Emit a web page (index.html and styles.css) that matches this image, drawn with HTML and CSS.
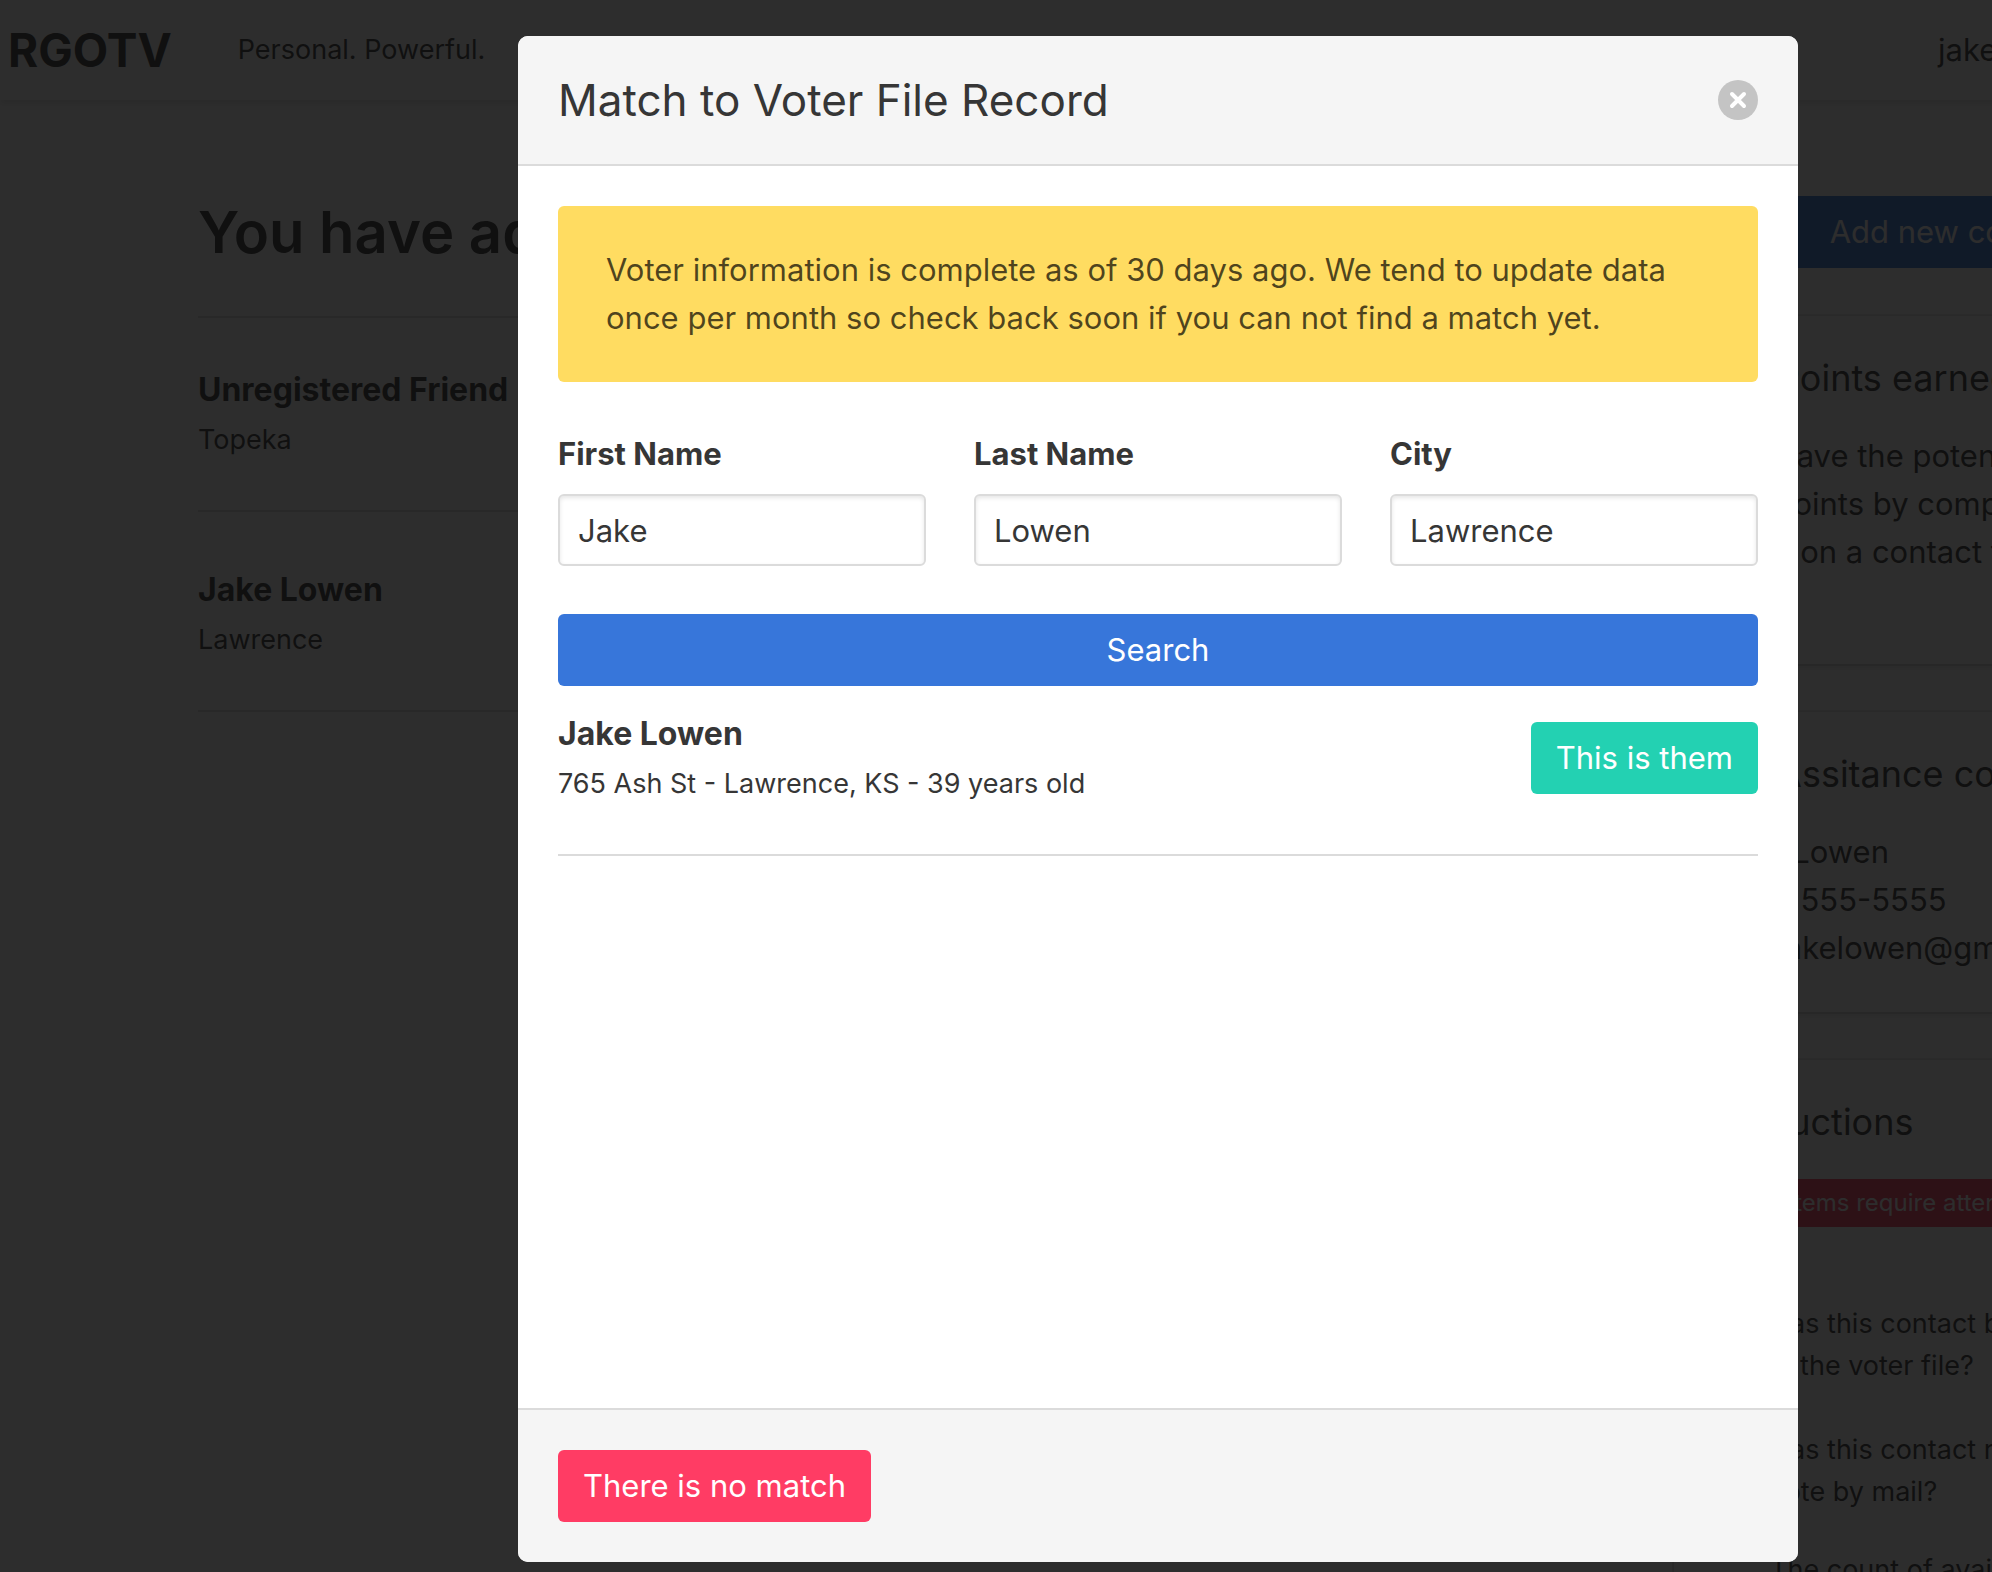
FILE: index.html
```html
<!DOCTYPE html>
<html lang="en">
<head>
    <meta charset="UTF-8">
    <meta name="viewport" content="width=device-width, initial-scale=1.0">
    <title>RGOTV</title>
    <link rel="stylesheet" href="styles.css">
</head>
<body>
    <div class="app">
        <nav class="nav">
            <a class="brand" href="#">RGOTV</a>
            <span class="tagline">Personal. Powerful.</span>
            <a class="account" href="#">jakelowen</a>
        </nav>

        <div class="container">
            <main class="contacts">
                <h1>You have added</h1>
                <hr>
                <article class="contact">
                    <strong>Unregistered Friend</strong>
                    <small>Topeka</small>
                </article>
                <hr>
                <article class="contact">
                    <strong>Jake Lowen</strong>
                    <small>Lawrence</small>
                </article>
                <hr>
            </main>

            <aside class="sidebar">
                <button class="button primary add" type="button">Add new contact</button>
                <section class="box">
                    <h2>My Points earned</h2>
                    <p class="points">You have the potential for<br>100 points by completing<br>tasks on a contact today.</p>
                </section>
                <section class="box">
                    <h2>My Assitance contact</h2>
                    <p>Jake Lowen<br>(785) 555-5555<br>votejakelowen@gmail.com</p>
                </section>
                <section class="box">
                    <h2>Instructions</h2>
                    <span class="tag">Two items require attention</span>
                    <div class="questions">
                        <ul>
                            <li>Has this contact been matched<br>in the voter file?</li>
                            <li>Has this contact requested to<br>vote by mail?</li>
                        </ul>
                        <p>The count of available points</p>
                    </div>
                </section>
            </aside>
        </div>

        <div class="modal">
            <div class="modal-card" role="dialog" aria-labelledby="modalTitle">
                <header class="modal-head">
                    <h2 id="modalTitle">Match to Voter File Record</h2>
                    <button class="close" type="button" aria-label="close">
                        <svg viewBox="0 0 40 40" width="40" height="40">
                            <path d="M14 14 L26 26 M26 14 L14 26" stroke="#fff" stroke-width="4" stroke-linecap="round" />
                        </svg>
                    </button>
                </header>

                <div class="modal-body">
                    <div class="notification">Voter information is complete as of 30 days ago. We tend to update data once per month so check back soon if you can not find a match yet.</div>

                    <form class="search">
                        <div class="fields">
                            <div class="field">
                                <label for="firstName">First Name</label>
                                <input type="text" id="firstName" value="Jake">
                            </div>
                            <div class="field">
                                <label for="lastName">Last Name</label>
                                <input type="text" id="lastName" value="Lowen">
                            </div>
                            <div class="field">
                                <label for="city">City</label>
                                <input type="text" id="city" value="Lawrence">
                            </div>
                        </div>
                        <button class="button primary" type="button">Search</button>
                    </form>

                    <div class="result">
                        <div class="contact">
                            <strong>Jake Lowen</strong>
                            <small>765 Ash St - Lawrence, KS - 39 years old</small>
                        </div>
                        <button class="button success" type="button">This is them</button>
                    </div>
                    <hr>
                </div>

                <footer class="modal-foot">
                    <button class="button danger" type="button">There is no match</button>
                </footer>
            </div>
        </div>
    </div>
</body>
</html>
```
FILE: styles.css
```css
* {
    box-sizing: border-box;
    margin: 0;
    padding: 0;
}
body {
    font-family: Inter, "Liberation Sans", sans-serif;
    font-size: 31px;
    line-height: 48px;
    color: #363636;
    background-color: white;
    overflow: hidden;
}
a {
    color: inherit;
    text-decoration: none;
}
hr {
    height: 2px;
    border: none;
    background-color: #dbdbdb;
}
.app {
    position: relative;
    min-width: 2316px;
    height: 100vh;
    overflow: hidden;
}

/* page */
.nav {
    display: flex;
    align-items: center;
    height: 100px;
    padding: 0 8px;
    box-shadow: 0 4px 6px rgba(10, 10, 10, 0.1);
}
.brand {
    font-size: 46px;
    font-weight: 700;
}
.tagline {
    margin-left: 66px;
    font-size: 27px;
}
.account {
    width: 370px;
    margin-left: auto;
}
.container {
    display: grid;
    grid-template-columns: 1fr 444px;
    gap: 48px;
    max-width: 1920px;
    margin: 0 auto;
    padding-top: 96px;
}
.contacts h1 {
    margin-bottom: 48px;
    font-size: 58px;
    font-weight: 600;
    line-height: 72px;
}
.contact strong {
    display: block;
    font-size: 32px;
    font-weight: 700;
}
.contact small {
    font-size: 27px;
    line-height: 1;
}
.contacts .contact {
    padding: 48px 0;
}
.contacts .contact ~ .contact {
    padding-top: 54px;
}
.sidebar {
    display: flex;
    flex-direction: column;
    gap: 48px;
}
.box {
    padding: 40px;
    border-radius: 10px;
    box-shadow: 0 4px 6px rgba(10, 10, 10, 0.1), 0 0 0 2px rgba(10, 10, 10, 0.1);
    white-space: nowrap;
}
.box h2 {
    margin-bottom: 32px;
    font-size: 36px;
    font-weight: 400;
    line-height: 44px;
}
.box .points {
    margin-bottom: 48px;
}
.tag {
    display: inline-block;
    padding: 0 20px;
    border-radius: 6px;
    background-color: #ff3860;
    color: white;
    font-size: 24px;
}
.questions {
    margin: 76px 0 0 56px;
    font-size: 27px;
    line-height: 42px;
}
.questions ul {
    margin-bottom: 36px;
    list-style: none;
}
.questions li + li {
    margin-top: 42px;
}

/* controls */
.button {
    height: 72px;
    padding: 0 25px;
    border: none;
    border-radius: 6px;
    color: white;
    font: inherit;
    cursor: pointer;
}
.primary {
    background-color: #3776da;
}
.success {
    background-color: #23d1b2;
}
.danger {
    background-color: #ff3c64;
}
.add {
    align-self: flex-end;
    width: 74%;
}

/* modal */
.modal {
    position: absolute;
    inset: 0;
    display: flex;
    justify-content: center;
    padding: 36px 0 10px;
    background-color: rgba(10, 10, 10, 0.86);
}
.modal-card {
    display: flex;
    flex-direction: column;
    width: 1280px;
    border-radius: 10px;
    background-color: white;
    overflow: hidden;
}
.modal-head {
    display: flex;
    align-items: center;
    justify-content: space-between;
    padding: 40px;
    border-bottom: 2px solid #dbdbdb;
    background-color: #f5f5f5;
}
.modal-head h2 {
    font-size: 44px;
    font-weight: 400;
    line-height: 48px;
}
.close {
    width: 40px;
    height: 40px;
    border: none;
    border-radius: 50%;
    background-color: #c4c4c4;
    cursor: pointer;
}
.close svg {
    display: block;
}
.modal-body {
    flex: 1;
    padding: 40px;
}
.notification {
    margin-bottom: 48px;
    padding: 40px 48px;
    border-radius: 6px;
    background-color: #ffdc61;
    color: rgba(0, 0, 0, 0.7);
}
.search {
    display: flex;
    flex-direction: column;
    gap: 48px;
}
.fields {
    display: grid;
    grid-template-columns: repeat(3, 1fr);
    gap: 48px;
}
label {
    display: block;
    margin-bottom: 16px;
    font-weight: 700;
}
input {
    width: 100%;
    height: 72px;
    padding: 0 18px;
    border: 2px solid #dbdbdb;
    border-radius: 6px;
    box-shadow: inset 0 2px 4px rgba(10, 10, 10, 0.1);
    color: #363636;
    font: inherit;
}
.result {
    display: flex;
    align-items: center;
    justify-content: space-between;
    padding: 24px 0 48px;
}
.modal-foot {
    padding: 40px;
    border-top: 2px solid #dbdbdb;
    background-color: #f5f5f5;
}
.modal-foot .button {
    display: block;
}
```
